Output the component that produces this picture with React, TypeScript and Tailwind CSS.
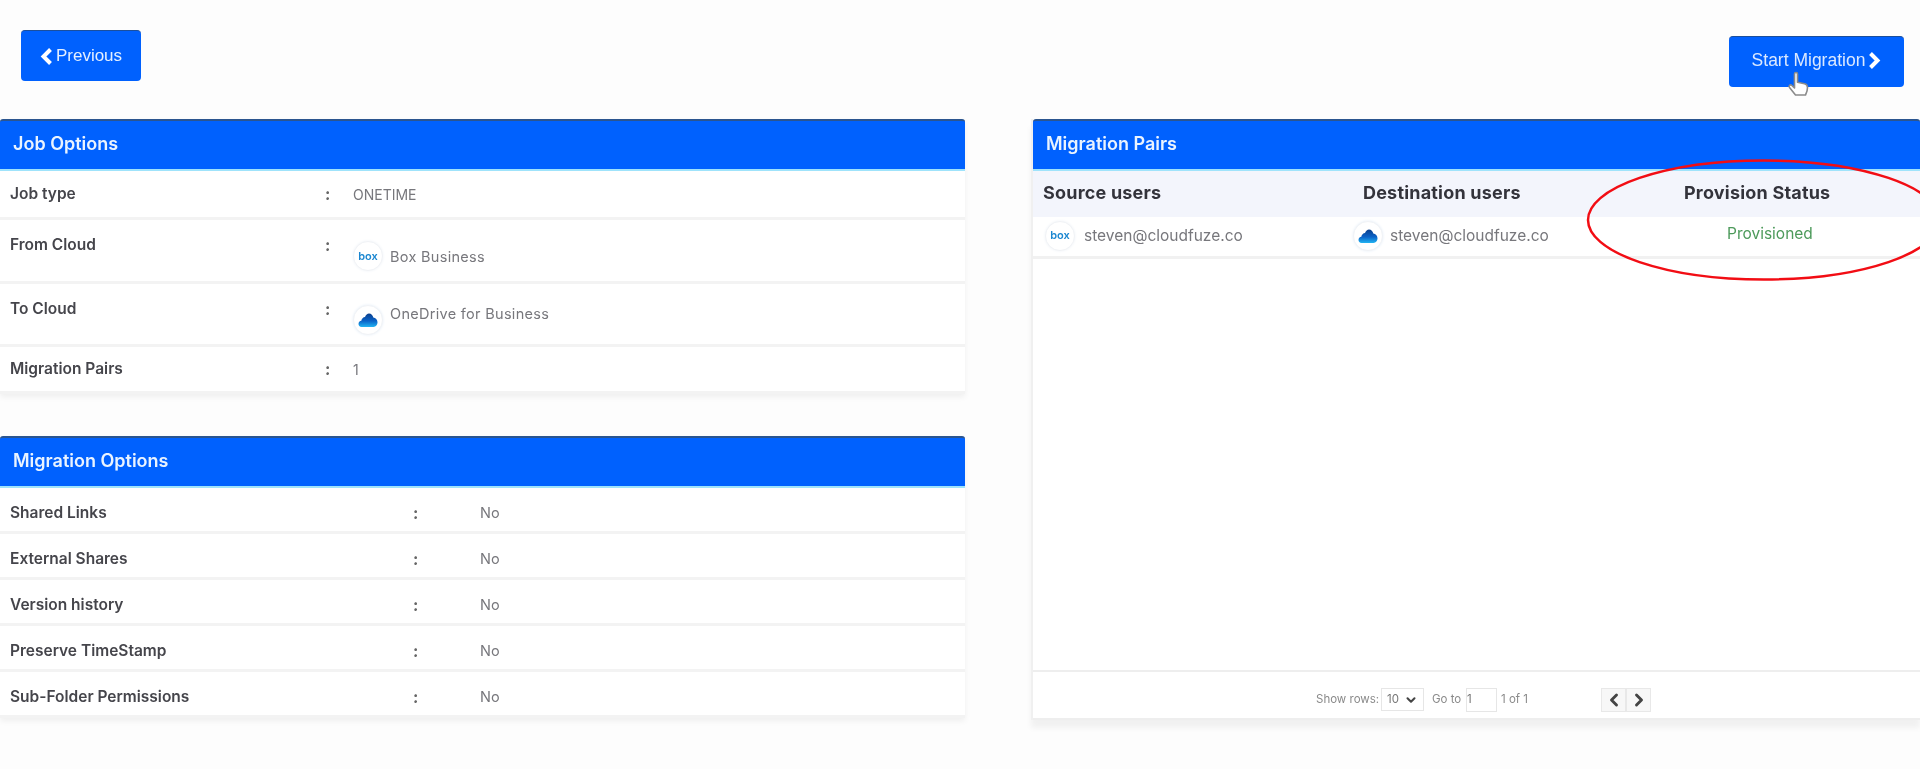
import React from "react";
import { ChevronLeft, ChevronRight, ChevronDown } from "lucide-react";

const font = "font-['Inter','Liberation_Sans',sans-serif]";

function BoxIcon() {
  return (
    <span className="flex h-[30px] w-[30px] shrink-0 items-center justify-center rounded-full border border-[#f1f3f6] bg-white shadow-[0_0_3px_#eef2f7]">
      <span className="text-[11px] font-semibold leading-none text-[#1a86d0]">box</span>
    </span>
  );
}

function OneDriveIcon() {
  return (
    <span className="flex h-[30px] w-[30px] shrink-0 items-center justify-center rounded-full border border-[#f1f3f6] bg-white shadow-[0_0_3px_#e4edf7]">
      <svg width="20" height="16" viewBox="0 0 20 16">
        <defs>
          <linearGradient id="odg" x1="0" y1="0" x2="0" y2="1">
            <stop offset="0" stopColor="#0b3f8c" />
            <stop offset="0.55" stopColor="#0a63c8" />
            <stop offset="1" stopColor="#22b4f2" />
          </linearGradient>
        </defs>
        <path d="M3.6 15C1.6 15 .5 13.5.5 12c0-1.7 1.2-3 2.8-3.2C3.7 6.6 5.2 5.2 7 5c.9-2 2.3-3.5 4-3.5 2.2 0 3.900 1.800 4.300 4 2.300.1 4.200 2.200 4.200 4.800 0 2.300-1.600 4.700-4 4.700z" fill="url(#odg)" />
      </svg>
    </span>
  );
}

function Chevron({ dir }: { dir: "left" | "right" }) {
  return (
    <svg width="13" height="19" viewBox="0 0 13 19" fill="none" className="shrink-0">
      <path
        d={dir === "left" ? "M10.500 2.500 3.500 9.500l7 7" : "M2.500 2.500l7 7-7 7"}
        stroke="#ffffff"
        strokeWidth="4"
      />
    </svg>
  );
}

function Header({ title }: { title: string }) {
  return (
    <div className="flex h-[52px] items-center rounded-t-[3px] border-t-2 border-b-2 border-t-[#2b558f] border-b-[#9fe3fb] bg-[#0061fe] pb-[3px] pl-[13px] text-[18px] font-semibold text-[#eaf4ff]">
      {title}
    </div>
  );
}

function JobRow({ label, h, align, children }: { label: string; h: string; align: string; children: React.ReactNode }) {
  return (
    <div className={`flex border-b-[3px] border-[#f3f3f3] ${h} ${align}`}>
      <span className="w-[325px] shrink-0 pl-[10px] text-[15.5px] font-semibold text-[#45454b]">{label}</span>
      <span className="w-[28px] shrink-0 text-[16px] font-bold text-[#666]">:</span>
      {children}
    </div>
  );
}

function OptionRow({ label }: { label: string }) {
  return (
    <div className="flex h-[46px] items-center border-b-[3px] border-[#f3f3f3] pt-[6px]">
      <span className="w-[413px] shrink-0 pl-[10px] text-[15.5px] font-semibold text-[#45454b]">{label}</span>
      <span className="w-[67px] shrink-0 text-[16px] font-bold text-[#666]">:</span>
      <span className="text-[14.5px] text-[#77777c]">No</span>
    </div>
  );
}

export default function App() {
  return (
    <div className={`relative h-[769px] w-[1920px] overflow-hidden bg-[#fdfdfd] ${font}`}>
      <div className="flex h-full gap-[66px] blur-[0.5px]">
        <div className="flex w-[965px] shrink-0 flex-col">
          <div className="h-[119px] pl-[21px] pt-[30px]">
            <button className="flex h-[51px] w-[120px] items-center justify-center gap-[3px] rounded-[4px] border-t border-[#1b4f9c] bg-[#0061fe] font-['Liberation_Sans',sans-serif] text-[17px] text-[#e4f0ff]">
              <Chevron dir="left" />
              Previous
            </button>
          </div>

          <section className="shadow-[0_3px_6px_rgba(0,0,0,0.06)]">
            <Header title="Job Options" />
            <div className="bg-white">
              <JobRow label="Job type" h="h-[49px]" align="items-center">
                <span className="text-[14px] text-[#77777c]">ONETIME</span>
              </JobRow>
              <JobRow label="From Cloud" h="h-[64px]" align="items-start pt-[13px]">
                <span className="flex items-center gap-[7px] pt-[8px]">
                  <BoxIcon />
                  <span className="mt-[2px] text-[14.5px] tracking-[0.3px] text-[#77777c]">Box Business</span>
                </span>
              </JobRow>
              <JobRow label="To Cloud" h="h-[63px]" align="items-start pt-[13px]">
                <span className="flex items-start gap-[7px] pt-[8px]">
                  <OneDriveIcon />
                  <span className="-mt-[2px] text-[14.5px] tracking-[0.3px] text-[#77777c]">OneDrive for Business</span>
                </span>
              </JobRow>
              <JobRow label="Migration Pairs" h="h-[47px]" align="items-center">
                <span className="text-[14px] text-[#77777c]">1</span>
              </JobRow>
            </div>
          </section>

          <section className="mt-[42px] shadow-[0_3px_6px_rgba(0,0,0,0.06)]">
            <Header title="Migration Options" />
            <div className="bg-white">
              <OptionRow label="Shared Links" />
              <OptionRow label="External Shares" />
              <OptionRow label="Version history" />
              <OptionRow label="Preserve TimeStamp" />
              <OptionRow label="Sub-Folder Permissions" />
            </div>
          </section>
        </div>

        <div className="flex min-w-0 flex-1 flex-col">
          <div className="flex h-[119px] justify-end pr-[16px] pt-[36px]">
            <button className="flex h-[51px] w-[175px] items-center justify-center gap-[3px] rounded-[4px] border-t border-[#1b4f9c] bg-[#0061fe] pb-[3px] font-['Liberation_Sans',sans-serif] text-[17.5px] text-[#dbe9ff]">
              Start Migration
              <Chevron dir="right" />
            </button>
          </div>

          <section className="flex h-[601px] flex-col border-l-2 border-[#f0f0f0] bg-white shadow-[0_8px_6px_rgba(0,0,0,0.05)]">
            <Header title="Migration Pairs" />
            <div className="flex h-[46px] items-center bg-[#f3f5fc] pb-[3px] text-[18px] font-bold tracking-[0.2px] text-[#33333b]">
              <span className="w-[320px] shrink-0 pl-[10px]">Source users</span>
              <span className="w-[321px] shrink-0 pl-[10px]">Destination users</span>
              <span className="pl-[10px]">Provision Status</span>
            </div>
            <div className="flex h-[42px] items-center border-b-[3px] border-[#f1f1f1] pb-[2px] text-[15.5px] text-[#77777c]">
              <span className="flex w-[320px] shrink-0 items-center gap-[9px] pl-[12px]">
                <BoxIcon />
                steven@cloudfuze.co
              </span>
              <span className="flex w-[320px] shrink-0 items-center gap-[7px]">
                <OneDriveIcon />
                steven@cloudfuze.co
              </span>
              <span className="-mt-[3px] pl-[54px] text-[15.5px] text-[#4d9a5b]">Provisioned</span>
            </div>
            <div className="flex-1" />
            <div className="flex h-[50px] items-center border-t-2 border-b-2 border-[#eeeeee] pl-[283px] pt-[9px] text-[11.5px] text-[#8a8a8a]">
              <span className="w-[65px] whitespace-nowrap">Show rows:</span>
              <span className="flex h-[23px] w-[43px] items-center justify-between border border-[#e6e6e6] px-[5px] text-[#777]">
                10
                <ChevronDown size={14} strokeWidth={3.5} className="text-[#444]" />
              </span>
              <span className="ml-[8px] w-[34px] whitespace-nowrap">Go to</span>
              <span className="flex h-[24px] w-[31px] items-center border border-[#e6e6e6] text-[#777]">1</span>
              <span className="ml-[4px] w-[100px] whitespace-nowrap">1 of 1</span>
              <span className="flex h-[24px] w-[25px] items-center justify-center border border-[#e8e8e8] bg-[#f7f7f7]">
                <ChevronLeft size={20} strokeWidth={3.5} className="text-[#444]" />
              </span>
              <span className="flex h-[24px] w-[25px] items-center justify-center border border-[#e8e8e8] bg-[#f7f7f7]">
                <ChevronRight size={20} strokeWidth={3.5} className="text-[#444]" />
              </span>
            </div>
          </section>
        </div>
      </div>

      <svg className="absolute left-[1586px] top-[158px]" width="360" height="124" viewBox="0 0 360 124" fill="none">
        <ellipse cx="178" cy="62" rx="176" ry="59.5" stroke="#f20d14" strokeWidth="2.500" />
      </svg>

      <svg className="absolute left-[1787px] top-[71px]" width="24" height="29" viewBox="0 0 24 29">
        <path
          d="M7.500 3c0-2 3-2 3 0v8.200l7 1.600c2 .5 3 1.800 3 3.800 0 3-.7 5-2 7.400H8.500L2.500 16.500c-1.300-1.700.8-3.500 2.400-2l2.600 2.500z"
          fill="#ffffff"
          stroke="#8b8b8b"
          strokeWidth="1.600"
          strokeLinejoin="round"
        />
      </svg>
    </div>
  );
}
